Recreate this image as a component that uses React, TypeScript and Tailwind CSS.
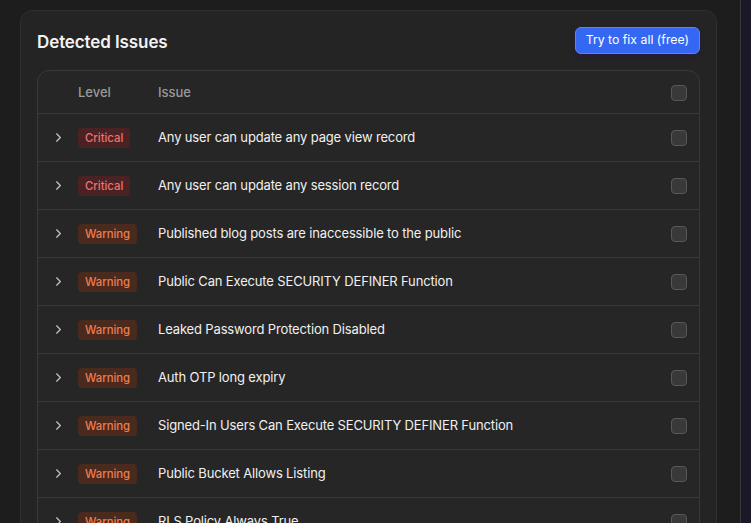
import { ChevronRight } from 'lucide-react';

type Level = 'Critical' | 'Warning';

interface Issue {
  level: Level;
  title: string;
}

const issues: Issue[] = [
  { level: 'Critical', title: 'Any user can update any page view record' },
  { level: 'Critical', title: 'Any user can update any session record' },
  { level: 'Warning', title: 'Published blog posts are inaccessible to the public' },
  { level: 'Warning', title: 'Public Can Execute SECURITY DEFINER Function' },
  { level: 'Warning', title: 'Leaked Password Protection Disabled' },
  { level: 'Warning', title: 'Auth OTP long expiry' },
  { level: 'Warning', title: 'Signed-In Users Can Execute SECURITY DEFINER Function' },
  { level: 'Warning', title: 'Public Bucket Allows Listing' },
  { level: 'Warning', title: 'RLS Policy Always True' },
];

const LevelBadge = ({ level }: { level: Level }) => {
  const cls =
    level === 'Critical'
      ? 'bg-[#4b2224] text-[#f2716f]'
      : 'bg-[#4a2a1d] text-[#f27d4e]';
  return (
    <span className={`inline-flex h-[20px] items-center rounded-[4px] px-[7px] pt-[1px] text-[11.3px] font-medium ${cls}`}>
      {level}
    </span>
  );
};

const Checkbox = () => (
  <span className="block h-[16px] w-[16px] rounded-[4px] border border-[#575757] bg-[#393939]" />
);

const App = () => {
  return (
    <div className="flex h-[523px] w-full overflow-hidden bg-[#1d1d1d] font-['Inter',sans-serif] text-[#ececec]">
      {/* main area */}
      <div className="min-w-0 flex-1 pl-[20px] pr-[23px] pt-[10px]">
        <div className="rounded-[12px] border border-[#2f2f2f] bg-[#242424] p-[16px]">
          <div className="flex h-[27px] items-center justify-between">
            <h2 className="relative top-[1px] text-[17px] leading-[24px] font-semibold tracking-[-0.1px] text-[#f2f2f2]">Detected Issues</h2>
            <button className="h-[27px] rounded-[6px] border border-[#5b84f6] bg-[#3468f3] px-[10px] text-[12.3px] text-white shadow-[0_2px_4px_rgba(40,20,90,0.6)]">
              Try to fix all (free)
            </button>
          </div>

          <div className="mt-[16px] overflow-hidden rounded-[12px] border border-[#393939] bg-[#262626]">
            <div className="grid h-[43px] grid-cols-[40px_80px_1fr_auto] items-center border-b border-[#393939] pr-[12px] pt-[2px] text-[13px] font-medium text-[#9a9a9a]">
              <span />
              <span>Level</span>
              <span>Issue</span>
              <Checkbox />
            </div>
            {issues.map((issue, i) => (
              <div
                key={i}
                className="grid h-[48px] grid-cols-[40px_80px_1fr_auto] items-center border-b border-[#393939] pr-[12px] text-[13px] tracking-[-0.15px]"
              >
                <span className="flex justify-center text-[#c8c8c8]">
                  <ChevronRight size={15} strokeWidth={1.8} />
                </span>
                <span className="tracking-normal">
                  <LevelBadge level={issue.level} />
                </span>
                <span className="truncate text-[#f0f0f0]">{issue.title}</span>
                <Checkbox />
              </div>
            ))}
          </div>
        </div>
      </div>

      {/* right edge panel */}
      <div className="w-[11px] shrink-0 border-l border-[#383838] bg-[#1a1826]" />
    </div>
  );
};

export default App;
